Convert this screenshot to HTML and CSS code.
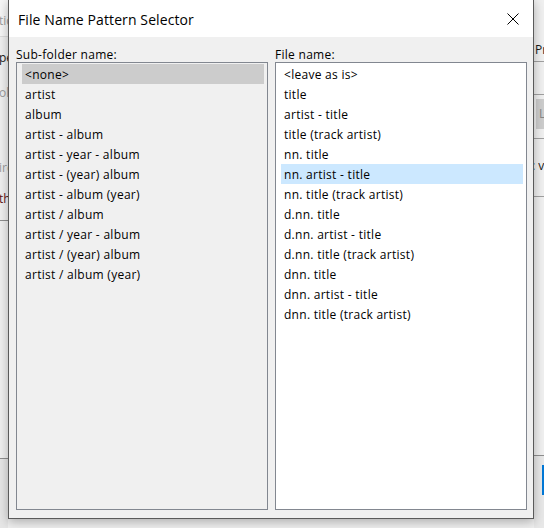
FILE: index.html
```html
<!DOCTYPE html>
<html>
<head>
<meta charset="utf-8">
<link rel="stylesheet" href="styles.css">
</head>
<body>
<div class="desk">
  <div class="strip strip-left">
    <div class="l-top"><span class="bgtxt gray">tic</span></div>
    <div class="l-body">
      <div class="bgrow r1 dark">pe</div>
      <div class="bgrow r2 gray">ol</div>
      <div class="bgrow r3 gray">ire</div>
      <div class="bgrow r4 maroon">th</div>
    </div>
    <div class="l-mid"></div>
    <div class="l-bottom"></div>
  </div>
  <div class="strip-mid"></div>
  <div class="strip strip-right">
    <div class="r-top"></div>
    <div class="bgrow rr1 dark">Pre</div>
    <div class="r-cell"></div>
    <div class="r-box"><span class="boxtxt">L</span></div>
    <div class="r-cell2"></div>
    <div class="bgrow rr2 dark">: v</div>
    <div class="r-cell3"></div>
    <div class="r-fill"></div>
    <div class="r-bottom"><div class="blue-btn"></div></div>
  </div>

  <div class="dialog">
    <div class="titlebar">
      <div class="title">File Name Pattern Selector</div>
      <div class="close">
        <svg width="12" height="12" viewBox="0 0 12 12"><path d="M0.5 0.5 L11.5 11.5 M11.5 0.5 L0.5 11.5" stroke="#000" stroke-width="1" fill="none"/></svg>
      </div>
    </div>
    <div class="client">
      <div class="label">Sub-folder name:</div>
      <div class="label">File name:</div>
      <div class="listbox inactive">
        <div class="item sel-gray">&lt;none&gt;</div>
        <div class="item">artist</div>
        <div class="item">album</div>
        <div class="item">artist - album</div>
        <div class="item">artist - year - album</div>
        <div class="item">artist - (year) album</div>
        <div class="item">artist - album (year)</div>
        <div class="item">artist / album</div>
        <div class="item">artist / year - album</div>
        <div class="item">artist / (year) album</div>
        <div class="item">artist / album (year)</div>
      </div>
      <div class="listbox active">
        <div class="item">&lt;leave as is&gt;</div>
        <div class="item">title</div>
        <div class="item">artist - title</div>
        <div class="item">title (track artist)</div>
        <div class="item">nn. title</div>
        <div class="item sel-blue">nn. artist - title</div>
        <div class="item">nn. title (track artist)</div>
        <div class="item">d.nn. title</div>
        <div class="item">d.nn. artist - title</div>
        <div class="item">d.nn. title (track artist)</div>
        <div class="item">dnn. title</div>
        <div class="item">dnn. artist - title</div>
        <div class="item">dnn. title (track artist)</div>
      </div>
    </div>
  </div>
</div>
</body>
</html>
```

FILE: styles.css
```css
html, body {
  margin: 0;
  padding: 0;
}
body {
  background: #f0f0f0;
}
.desk {
  position: relative;
  width: 544px;
  height: 528px;
  overflow: hidden;
  display: flex;
  background: #f0f0f0;
  font-family: "Open Sans", "Noto Sans", sans-serif;
  font-size: 12px;
  color: #000;
}

/* background application fragments */
.strip {
  flex: none;
  display: flex;
  flex-direction: column;
  overflow: hidden;
}
.strip-left {
  width: 8px;
}
.strip-mid {
  flex: 1;
}
.strip-right {
  width: 10px;
}
.bgrow {
  height: 20px;
  line-height: 20px;
  white-space: nowrap;
  overflow: hidden;
}
.bgtxt {
  white-space: nowrap;
}
.gray { color: #9c9c9c; }
.dark { color: #1a1a1a; }
.maroon { color: #5e1414; }

.l-top {
  height: 36px;
  background: #f6f6f6;
  border-bottom: 1px solid #dcdcdc;
  line-height: 41px;
  white-space: nowrap;
  overflow: hidden;
  text-indent: -1px;
}
.l-body {
  height: 183px;
  border-bottom: 1px solid #8e8e8e;
}
.l-body .bgrow { text-indent: -1px; }
.r1 { margin-top: 11px; }
.r2 { margin-top: 15px; }
.r3 { margin-top: 55px; }
.r4 { margin-top: 11px; }
.l-mid {
  height: 237px;
  border-bottom: 1px solid #8e8e8e;
}
.l-bottom {
  flex: 1;
  background: #e6e6e6;
}

.r-top {
  height: 40px;
}
.rr1 {
  padding-left: 1px;
  border-bottom: 1px solid #a0a0a0;
  height: 21px;
  line-height: 20px;
}
.r-cell {
  height: 32px;
  border-bottom: 1px solid #a0a0a0;
}
.r-box {
  margin-top: 4px;
  height: 30px;
  margin-left: 2px;
  background: #cdcdcd;
  line-height: 30px;
  overflow: hidden;
}
.boxtxt {
  color: #888;
  padding-left: 3px;
}
.r-cell2 {
  height: 9px;
  border-bottom: 1px solid #a0a0a0;
}
.rr2 {
  margin-top: 17px;
  text-indent: -2px;
}
.r-cell3 {
  height: 20px;
  border-bottom: 1px solid #a0a0a0;
}
.r-fill {
  height: 258px;
  border-bottom: 1px solid #8e8e8e;
}
.r-bottom {
  flex: 1;
  background: #e8e8e8;
  padding-top: 9px;
}
.blue-btn {
  margin-left: 8px;
  height: 30px;
  background: #0078d7;
}

/* dialog window */
.dialog {
  position: absolute;
  left: 8px;
  top: -1px;
  width: 524px;
  height: 518px;
  border: 1px solid #5a5a5a;
  background: #f0f0f0;
  box-shadow: 0 3px 10px rgba(0, 0, 0, 0.28);
  display: flex;
  flex-direction: column;
}
.titlebar {
  height: 37px;
  flex: none;
  background: #fff;
  display: flex;
  align-items: center;
}
.title {
  flex: 1;
  padding-left: 9px;
  font-size: 14px;
  letter-spacing: 0.1px;
  line-height: 20px;
  padding-top: 2px;
}
.close {
  width: 40px;
  height: 37px;
  display: flex;
  align-items: center;
  justify-content: center;
}
.close svg {
  display: block;
}
.client {
  flex: 1;
  display: grid;
  grid-template-columns: 252px 252px;
  grid-template-rows: 25px 1fr;
  column-gap: 7px;
  padding: 0 6px 8px 7px;
  min-height: 0;
  letter-spacing: 0.28px;
}
.label {
  padding-top: 10px;
  line-height: 15px;
  height: 15px;
}
.listbox {
  border: 1px solid #828790;
  padding: 1px 3px 0 5px;
  overflow: hidden;
}
.listbox.inactive {
  background: #f0f0f0;
}
.listbox.active {
  background: #fff;
}
.item {
  height: 18px;
  padding-top: 2px;
  line-height: 18px;
  padding-left: 3px;
  white-space: nowrap;
}
.sel-gray {
  background: #cccccc;
}
.sel-blue {
  background: #cce8ff;
}
```
